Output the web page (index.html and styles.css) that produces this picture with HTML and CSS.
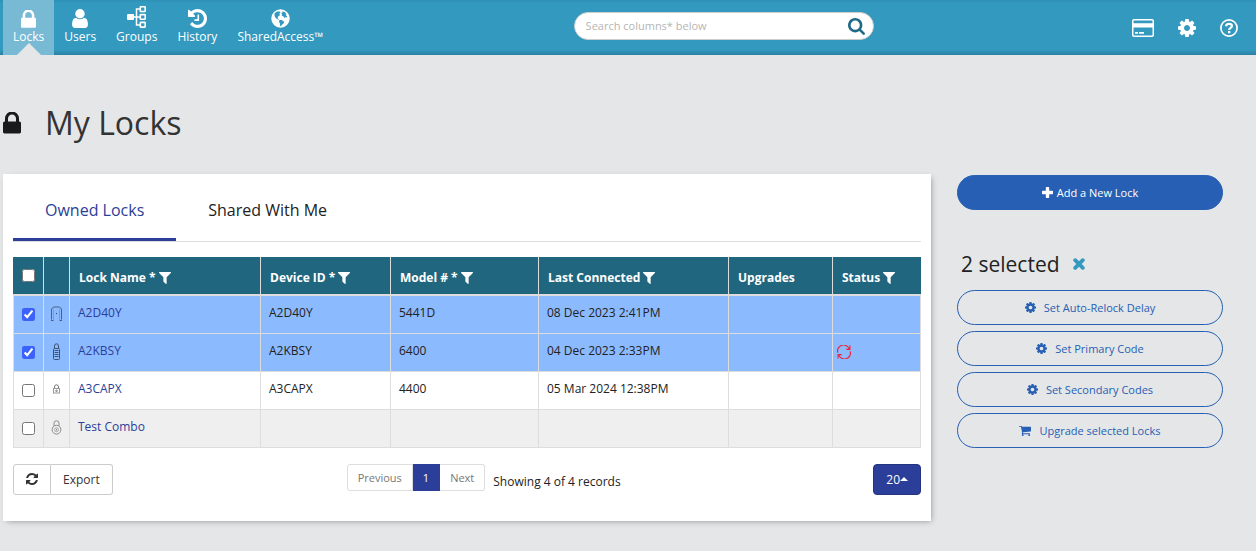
FILE: index.html
```html
<!DOCTYPE html>
<html lang="en">
<head>
<meta charset="utf-8">
<meta name="viewport" content="width=device-width, initial-scale=1">
<title>My Locks</title>
<link rel="stylesheet" href="styles.css">
</head>
<body>
<svg class="sprite" aria-hidden="true">
  <symbol id="i-lock" viewBox="320 192 1152 1344"><path d="M640 768h512v-192q0-106-75-181t-181-75-181 75-75 181v192zm832 96v576q0 40-28 68t-68 28h-960q-40 0-68-28t-28-68v-576q0-40 28-68t68-28h32v-192q0-184 132-316t316-132 316 132 132 316v192h32q40 0 68 28t28 68z"/></symbol>
  <symbol id="i-user" viewBox="256 128 1280 1536"><path d="M1536 1399q0 109-62.500 187t-150.500 78h-854q-88 0-150.500-78t-62.500-187q0-85 8.500-160.500t31.500-152 58.500-131 94-89 134.500-34.500q131 128 313 128t313-128q76 0 134.500 34.500t94 89 58.500 131 31.500 152 8.500 160.500zm-256-887q0 159-112.500 271.500t-271.500 112.500-271.500-112.500-112.500-271.500 112.500-271.500 271.500-112.500 271.500 112.500 112.500 271.500z"/></symbol>
  <symbol id="i-groups" viewBox="0 0 20 22"><rect x="0" y="8" width="7" height="6" rx="1"/><path d="M7 11h6M13 3h-3.500v16H13" fill="none" stroke="currentColor" stroke-width="1.500"/><g fill="none" stroke="currentColor" stroke-width="1.600"><rect x="13.300" y="0.800" width="4.900" height="4.700" rx=".5"/><rect x="13.300" y="8.600" width="4.900" height="4.700" rx=".5"/><rect x="13.300" y="16.400" width="4.900" height="4.700" rx=".5"/></g></symbol>
  <symbol id="i-history" viewBox="128 128 1536 1536"><path d="M1664 896q0 156-61 298t-164 245-245 164-298 61q-172 0-327-72.500t-264-204.500q-7-10-6.500-22.500t8.500-20.500l137-138q10-9 25-9 16 2 23 12 73 95 179 147t225 52q104 0 198.500-40.500t163.500-109.500 109.500-163.500 40.500-198.500-40.500-198.500-109.500-163.500-163.500-109.500-198.500-40.500q-98 0-188 35.500t-160 101.500l137 138q31 30 14 69-17 40-59 40h-448q-26 0-45-19t-19-45v-448q0-42 40-59 39-17 69 14l130 129q107-101 244.500-156.500t284.500-55.500q156 0 298 61t245 164 164 245 61 298zm-640-288v448q0 14-9 23t-23 9h-320q-14 0-23-9t-9-23v-64q0-14 9-23t23-9h224v-352q0-14 9-23t23-9h64q14 0 23 9t9 23z"/></symbol>
  <symbol id="i-globe" viewBox="0 0 20 20"><circle cx="10" cy="10" r="9.700"/><path fill="#3399bf" d="M4 4.200 6.500 2.600l2.700.1.800 1.300-1.300 1 .8 1.300L7.600 8l-.8 1.700 1.700 1.100-.4.600-2.300-1.100-1.600-1.900-.6-2.200zM12.200 2.400l2.500 1.100 1.700 2-1 .6 1.500 1.700-.2 1.300-1.200-.7-1 1-1.700-1.900-1.500-.3.400-1.600-.9-1 1.200-.8zM9 11.500l2.300.1 2.500 1.700-.6 1.900-1.700 1.300-1 1.600-.9-.2-.2-2.700-1-1.800z"/></symbol>
  <symbol id="i-search" viewBox="64 128 1664 1664"><path d="M1216 832q0-185-131.500-316.500t-316.500-131.500-316.500 131.500-131.500 316.500 131.500 316.500 316.500 131.500 316.500-131.500 131.500-316.500zm512 832q0 52-38 90t-90 38q-54 0-90-38l-343-342q-179 124-399 124-143 0-273.500-55.500t-225-150-150-225-55.500-273.500 55.500-273.500 150-225 225-150 273.500-55.500 273.500 55.500 225 150 150 225 55.500 273.500q0 220-124 399l343 343q37 37 37 90z"/></symbol>
  <symbol id="i-card" viewBox="0 0 22 18"><path fill-rule="evenodd" d="M2 0h18a2 2 0 0 1 2 2v14a2 2 0 0 1-2 2H2a2 2 0 0 1-2-2V2a2 2 0 0 1 2-2zM1.500 2v2.200h19V2a.5.5 0 0 0-.5-.5H2a.5.500 0 0 0-.5.5zM1.500 8.500v7.500c0 .3.200.5.500.5h18c.3 0 .5-.2.500-.5V8.500zM3 13h3v1.800H3zM7 13h5v1.800H7z"/></symbol>
  <symbol id="i-cog" viewBox="128 128 1536 1536"><path d="M1152 896q0-106-75-181t-181-75-181 75-75 181 75 181 181 75 181-75 75-181zm512-109v222q0 12-8 23t-20 13l-185 28q-19 54-39 91 35 50 107 138 10 12 10 25t-9 23q-27 37-99 108t-94 71q-12 0-26-9l-138-108q-44 23-91 38-16 136-29 186-7 28-36 28h-222q-14 0-24.500-8.500t-11.500-21.500l-28-184q-49-16-90-37l-141 107q-10 9-25 9-14 0-25-11-126-114-165-168-7-10-7-23 0-12 8-23 15-21 51-66.500t54-70.500q-27-50-41-99l-183-27q-13-2-21-12.500t-8-23.500v-222q0-12 8-23t19-13l186-28q14-46 39-92-40-57-107-138-10-12-10-24 0-10 9-23 26-36 98.500-107.500t94.500-71.500q13 0 26 10l138 107q44-23 91-38 16-136 29-186 7-28 36-28h222q14 0 24.500 8.500t11.500 21.500l28 184q49 16 90 37l142-107q9-9 24-9 13 0 25 10 129 119 165 170 7 8 7 22 0 12-8 23-15 21-51 66.500t-54 70.500q26 50 41 98l183 28q13 2 21 12.500t8 23.500z"/></symbol>
  <symbol id="i-help" viewBox="0 0 18 18"><g fill="none" stroke="currentColor"><circle cx="9" cy="9" r="8.100" stroke-width="1.700"/><path stroke-width="2.200" d="M6 7.200C6.300 5.500 7.500 4.900 9 4.900c1.700 0 2.900.9 2.900 2.200C11.900 9 9.100 8.800 9.100 11"/></g><rect x="8" y="12" width="2.300" height="2.200"/></symbol>
  <symbol id="i-filter" viewBox="192 256 1408 1408"><path d="M1595 295q17 41-14 70l-493 493v742q0 42-39 59-13 5-25 5-27 0-45-19l-256-256q-19-19-19-45v-486l-493-493q-31-29-14-70 17-39 59-39h1280q42 0 59 39z"/></symbol>
  <symbol id="i-refresh" viewBox="128 128 1536 1536"><path d="M1639 1056q0 5-1 7-64 268-268 434.500t-478 166.500q-146 0-282.500-55t-243.500-157l-129 129q-19 19-45 19t-45-19-19-45v-448q0-26 19-45t45-19h448q26 0 45 19t19 45-19 45l-137 137q71 66 161 102t187 36q134 0 250-65t186-179q11-17 53-117 8-23 30-23h192q13 0 22.500 9.500t9.500 22.500zm25-800v448q0 26-19 45t-45 19h-448q-26 0-45-19t-19-45 19-45l138-138q-148-137-349-137-134 0-250 65t-186 179q-11 17-53 117-8 23-30 23h-199q-13 0-22.500-9.500t-9.500-22.500v-7q65-268 270-434.500t480-166.500q146 0 284 55.500t245 156.500l130-129q19-19 45-19t45 19 19 45z"/></symbol>
  <symbol id="i-sync" viewBox="0 0 14 14"><path fill="none" stroke="currentColor" stroke-width="1.200" d="M.8 7.700A5.800 5.800 0 0 1 12.300 4.300M13.200 6.300A5.800 5.800 0 0 1 1.700 9.700M12.900.6v3.700H9.200M1.100 13.400V9.700h3.700"/></symbol>
  <symbol id="i-plus" viewBox="0 0 11 11"><path d="M4.500 0h2a.7.700 0 0 1 .7.700v3.100h3.100a.7.700 0 0 1 .7.700v2a.7.700 0 0 1-.7.700H7.200v3.100a.7.700 0 0 1-.7.700h-2a.7.700 0 0 1-.7-.7V7.200H.7a.7.700 0 0 1-.7-.7v-2a.7.700 0 0 1 .7-.7h3.100V.7a.7.700 0 0 1 .7-.7z"/></symbol>
  <symbol id="i-times" viewBox="0 0 12 12"><path fill="none" stroke="currentColor" stroke-width="3.800" stroke-linecap="round" d="M2.200 2.200l7.600 7.600M9.800 2.200 2.200 9.800"/></symbol>
  <symbol id="i-cart" viewBox="64 256 1664 1408"><path d="M704 1536q0 52-38 90t-90 38-90-38-38-90 38-90 90-38 90 38 38 90zm896 0q0 52-38 90t-90 38-90-38-38-90 38-90 90-38 90 38 38 90zm128-1088v512q0 24-16.500 42.500t-40.500 21.500l-1044 122q13 60 13 70 0 16-24 64h920q26 0 45 19t19 45-19 45-45 19h-1024q-26 0-45-19t-19-45q0-11 8-31.500t16-36 21.500-40 15.500-29.500l-177-823h-204q-26 0-45-19t-19-45 19-45 45-19h256q16 0 28.500 6.500t19.500 15.500 13 24.500 8 26 5.500 29.500 4.500 26h1201q26 0 45 19t19 45z"/></symbol>
</svg>

<header class="topbar">
  <nav class="nav" aria-label="Main">
    <a class="nav-link active" href="#locks"><svg class="nav-icon nav-lock"><use href="#i-lock"/></svg>Locks</a>
    <a class="nav-link" href="#users"><svg class="nav-icon nav-user"><use href="#i-user"/></svg>Users</a>
    <a class="nav-link" href="#groups"><svg class="nav-icon nav-groups"><use href="#i-groups"/></svg>Groups</a>
    <a class="nav-link" href="#history"><svg class="nav-icon"><use href="#i-history"/></svg>History</a>
    <a class="nav-link" href="#sharedaccess"><svg class="nav-icon"><use href="#i-globe"/></svg>SharedAccess™</a>
  </nav>
  <form class="search" role="search">
    <input class="search-input" type="text" placeholder="Search columns* below" aria-label="Search columns">
    <button class="search-button" type="button" aria-label="Search"><svg class="icon-17"><use href="#i-search"/></svg></button>
  </form>
  <nav class="tools" aria-label="Account">
    <a href="#billing" aria-label="Billing"><svg class="icon-card"><use href="#i-card"/></svg></a>
    <a href="#settings" aria-label="Settings"><svg class="icon-18"><use href="#i-cog"/></svg></a>
    <a href="#help" aria-label="Help"><svg class="icon-18"><use href="#i-help"/></svg></a>
  </nav>
</header>

<main class="page">
  <h1 class="title"><svg class="title-icon"><use href="#i-lock"/></svg>My Locks</h1>
  <div class="columns">
    <section class="panel">
      <div class="tabs" role="tablist">
        <button class="tab selected" type="button" role="tab" aria-selected="true">Owned Locks</button>
        <button class="tab" type="button" role="tab" aria-selected="false">Shared With Me</button>
      </div>
      <table class="locks">
        <colgroup><col class="c-check"><col class="c-icon"><col class="c-name"><col class="c-device"><col class="c-model"><col class="c-last"><col class="c-upgrades"><col class="c-status"></colgroup>
        <thead>
          <tr>
            <th class="pick"><input type="checkbox" aria-label="Select all locks"></th>
            <th></th>
            <th>Lock Name * <svg class="filter"><use href="#i-filter"/></svg></th>
            <th>Device ID * <svg class="filter"><use href="#i-filter"/></svg></th>
            <th>Model # * <svg class="filter"><use href="#i-filter"/></svg></th>
            <th>Last Connected <svg class="filter"><use href="#i-filter"/></svg></th>
            <th>Upgrades</th>
            <th>Status <svg class="filter"><use href="#i-filter"/></svg></th>
          </tr>
        </thead>
        <tbody>
          <tr class="picked">
            <td class="pick"><input type="checkbox" checked aria-label="Select A2D40Y"></td>
            <td class="kind"><svg width="11" height="15" viewBox="0 0 11 15" fill="none"><path stroke="#4b5f80" d="M.5 13.500V3L2.500 1h6l2 2v10.500M0 14.500h2.500M8.500 14.500H11"/><path stroke="#7c99c9" d="M2.500 14V3M8.500 14V3"/><path stroke="#33435f" d="M5 7.500h1"/></svg></td>
            <td><a href="#A2D40Y">A2D40Y</a></td><td>A2D40Y</td><td>5441D</td><td>08 Dec 2023 2:41PM</td><td></td><td></td>
          </tr>
          <tr class="picked">
            <td class="pick"><input type="checkbox" checked aria-label="Select A2KBSY"></td>
            <td class="kind"><svg width="7" height="17" viewBox="0 0 7 17" fill="none" stroke="#3f5273"><path d="M1.500 5.500V3q0-2.200 2-2.200t2 2.200v2.500"/><rect x=".5" y="5.500" width="6" height="11" rx="1"/><path d="M1.500 7.500h4M1.500 9.500h4M1.500 11.500h4M1.500 13.500h4"/></svg></td>
            <td><a href="#A2KBSY">A2KBSY</a></td><td>A2KBSY</td><td>6400</td><td>04 Dec 2023 2:33PM</td><td></td>
            <td class="status"><svg class="sync" role="img" aria-label="Sync pending"><use href="#i-sync"/></svg></td>
          </tr>
          <tr>
            <td class="pick"><input type="checkbox" aria-label="Select A3CAPX"></td>
            <td class="kind"><svg width="7" height="10" viewBox="0 0 7 10" fill="none" stroke="#777"><path d="M1.500 4.500V3q0-2.200 2-2.200t2 2.200v1.500"/><rect x=".5" y="4.500" width="6" height="4.500" stroke="#999"/><circle cx="3.500" cy="6.800" r=".8"/></svg></td>
            <td><a href="#A3CAPX">A3CAPX</a></td><td>A3CAPX</td><td>4400</td><td>05 Mar 2024 12:38PM</td><td></td><td></td>
          </tr>
          <tr class="shaded">
            <td class="pick"><input type="checkbox" aria-label="Select Test Combo"></td>
            <td class="kind"><svg width="11" height="15" viewBox="0 0 11 15" fill="none" stroke="#8c8c8c"><path d="M3 6V3q0-2.200 2.500-2.200T8 3v3"/><circle cx="5.500" cy="9.700" r="4.400"/><circle cx="5.500" cy="9.700" r="2" stroke="#aaa"/><path d="M5.500 9v1.500"/></svg></td>
            <td><a href="#test-combo">Test Combo</a></td><td></td><td></td><td></td><td></td><td></td>
          </tr>
        </tbody>
      </table>
      <div class="footer">
        <div class="group">
          <button class="plain" type="button" aria-label="Refresh"><svg class="icon-12"><use href="#i-refresh"/></svg></button>
          <button class="plain" type="button">Export</button>
        </div>
        <div class="pager">
          <div class="group">
            <button class="page-button" type="button">Previous</button>
            <button class="page-button current" type="button" aria-current="page">1</button>
            <button class="page-button" type="button">Next</button>
          </div>
          <span class="summary">Showing 4 of 4 records</span>
        </div>
        <button class="size" type="button" aria-label="20 records per page">20<span class="caret"></span></button>
      </div>
    </section>

    <aside class="side">
      <button class="pill primary" type="button"><svg class="icon-11"><use href="#i-plus"/></svg>Add a New Lock</button>
      <div class="selection">
        <h2 class="count">2 selected</h2>
        <button class="clear" type="button" aria-label="Clear selection"><svg class="icon-12"><use href="#i-times"/></svg></button>
      </div>
      <div class="actions">
        <button class="pill" type="button"><svg class="icon-11"><use href="#i-cog"/></svg>Set Auto-Relock Delay</button>
        <button class="pill" type="button"><svg class="icon-11"><use href="#i-cog"/></svg>Set Primary Code</button>
        <button class="pill" type="button"><svg class="icon-11"><use href="#i-cog"/></svg>Set Secondary Codes</button>
        <button class="pill" type="button"><svg class="icon-12"><use href="#i-cart"/></svg>Upgrade selected Locks</button>
      </div>
    </aside>
  </div>
</main>
</body>
</html>
```

FILE: styles.css
```css
* {
  box-sizing: border-box;
}

body {
  margin: 0;
  background: #e5e6e8;
  color: #222;
  font: 12px/18px "Open Sans", "Noto Sans", sans-serif;
}

button,
input {
  margin: 0;
  font: inherit;
}

button {
  cursor: pointer;
}

svg {
  fill: currentColor;
  flex: none;
}

.sprite {
  display: none;
}

.icon-11 { width: 11px; height: 11px; }
.icon-12 { width: 12px; height: 12px; }
.icon-17 { width: 17px; height: 17px; }
.icon-18 { width: 18px; height: 18px; }
.icon-card { width: 22px; height: 18px; }

/* Top bar */
.topbar {
  display: grid;
  grid-template-columns: 3fr 300px 2fr;
  height: 55px;
  background: linear-gradient(#2f8fb4, #3399bf 3px, #3399bf 50px, #2a7fa1);
  color: #fff;
}

.nav {
  display: flex;
  padding-left: 3px;
}

.nav-link {
  position: relative;
  display: flex;
  flex-direction: column;
  align-items: center;
  justify-content: flex-end;
  padding: 0 10px 9px;
  color: #fff;
  text-decoration: none;
}

.nav-link.active {
  background: #78bad4;
}

.nav-link.active::after {
  content: "";
  position: absolute;
  bottom: 0;
  left: calc(50% - 12px);
  border: 12px solid transparent;
  border-top: 0;
  border-bottom-color: #e5e6e8;
}

.nav-icon {
  width: 19px;
  height: 19px;
}

.nav-lock { width: 15px; height: 18px; }
.nav-user { width: 16px; }
.nav-groups { width: 20px; height: 22px; }

.search {
  display: flex;
  align-items: center;
  align-self: start;
  height: 28px;
  margin-top: 12px;
  padding: 0 8px 0 11px;
  border: 1px solid #ccc;
  border-radius: 14px;
  background: #fff;
}

.search-input {
  flex: 1;
  min-width: 0;
  padding: 0;
  border: 0;
  outline: 0;
  background: none;
  font-size: 11px;
}

.search-input::placeholder {
  color: #b5b5b5;
}

.search-button,
.clear {
  display: flex;
  padding: 0;
  border: 0;
  background: none;
  color: #1f6b87;
}

.tools {
  display: flex;
  align-items: center;
  justify-content: flex-end;
  gap: 24px;
  padding-right: 18px;
}

.tools a {
  display: flex;
  color: #fff;
}

/* Page */
.page {
  padding: 44px 33px 30px 3px;
}

.title {
  display: flex;
  align-items: center;
  gap: 24px;
  margin: 0 0 27px;
  color: #333;
  font-size: 32px;
  font-weight: 500;
  line-height: 48px;
}

.title-icon {
  width: 18px;
  height: 22px;
  color: #1a1a1a;
}

.columns {
  display: grid;
  grid-template-columns: minmax(0, 1fr) 266px;
  gap: 26px;
  align-items: start;
}

.panel {
  padding: 8px 10px 26px;
  background: #fff;
  box-shadow: 2px 2px 6px -2px #8a938c;
}

.tabs {
  display: flex;
  margin-bottom: 15px;
  border-bottom: 1px solid #ddd;
}

.tab {
  padding: 18px 32px 17px;
  border: 0;
  border-bottom: 3px solid transparent;
  background: none;
  color: #222;
  font-size: 16px;
  font-weight: 500;
  line-height: 21px;
}

.tab.selected {
  border-bottom-color: #2b3e99;
  color: #2b3e99;
}

/* Table */
.locks {
  width: 100%;
  border-collapse: collapse;
  table-layout: fixed;
}

.c-check { width: 30px; }
.c-icon { width: 26px; }
.c-name { width: 191px; }
.c-device { width: 130px; }
.c-model { width: 148px; }
.c-upgrades { width: 104px; }
.c-status { width: 88px; }

.locks th {
  height: 38px;
  padding: 4px 9px 0;
  border: 1px solid #ddd;
  border-top: 0;
  border-bottom: 2px solid #ddd;
  background: #21667f;
  color: #fff;
  font-weight: 700;
  text-align: left;
  white-space: nowrap;
}

.locks th:first-child { border-left-color: #21667f; }
.locks th:last-child { border-right-color: #21667f; }

.locks td {
  height: 38px;
  padding: 8px;
  border: 1px solid #ddd;
  vertical-align: top;
  white-space: nowrap;
}

.locks a {
  color: #2b3e99;
  text-decoration: none;
}

.locks .picked { background: #8cbaff; }
.locks .shaded { background: #efefef; }

.locks .pick {
  padding: 0;
  text-align: center;
  vertical-align: middle;
}

.pick input {
  display: block;
  width: 13px;
  height: 13px;
  margin: 0 auto;
  accent-color: #3b63fb;
}

.locks .kind {
  padding: 0 0 2px;
  vertical-align: middle;
}

.kind svg {
  display: block;
  margin: 0 auto;
  fill: none;
}

.locks .status {
  padding: 0 4px;
  vertical-align: middle;
}

.sync {
  display: block;
  width: 14px;
  height: 14px;
  color: #f0243c;
}

.filter {
  width: 12px;
  height: 12px;
  vertical-align: -2px;
}

/* Table footer */
.footer {
  display: grid;
  grid-template-columns: 10fr auto 9fr;
  align-items: start;
  padding-top: 16px;
}

.group {
  display: flex;
}

.plain,
.page-button {
  display: flex;
  align-items: center;
  padding: 5px 12px;
  border: 1px solid #ccc;
  background: #fff;
  color: #333;
  line-height: 19px;
}

.page-button {
  padding: 4px 10px;
  border-color: #ddd;
  color: #777;
  font-size: 11px;
  line-height: 17px;
}

.group button + button { border-left-width: 0; }
.group button:first-child { border-radius: 3px 0 0 3px; }
.group button:last-child { border-radius: 0 3px 3px 0; }

.page-button.current {
  border-color: #2b3e99;
  background: #2b3e99;
  color: #fff;
}

.pager {
  display: flex;
  gap: 8px;
}

.summary {
  padding-top: 9px;
}

.size {
  display: flex;
  align-items: center;
  justify-self: end;
  padding: 5px 12px;
  border: 1px solid #24357f;
  border-radius: 4px;
  background: #2b3e99;
  color: #fff;
  line-height: 19px;
}

.caret {
  border: 4px solid transparent;
  border-top: 0;
  border-bottom-color: #fff;
}

/* Sidebar */
.side {
  padding-top: 1px;
}

.pill {
  display: flex;
  align-items: center;
  justify-content: center;
  gap: 8px;
  width: 100%;
  padding: 8px 16px;
  border: 1px solid #265fb3;
  border-radius: 18px;
  background: none;
  color: #265fb3;
  font-size: 11px;
  line-height: 17px;
}

.pill.primary {
  gap: 4px;
  background: #265fb3;
  color: #fff;
}

.selection {
  display: flex;
  align-items: center;
  gap: 13px;
  padding: 39px 4px 11px;
}

.count {
  margin: 0;
  font-size: 21px;
  font-weight: 400;
  line-height: 30px;
}

.clear {
  color: #3399bf;
}

.actions {
  display: grid;
  gap: 6px;
}
```
